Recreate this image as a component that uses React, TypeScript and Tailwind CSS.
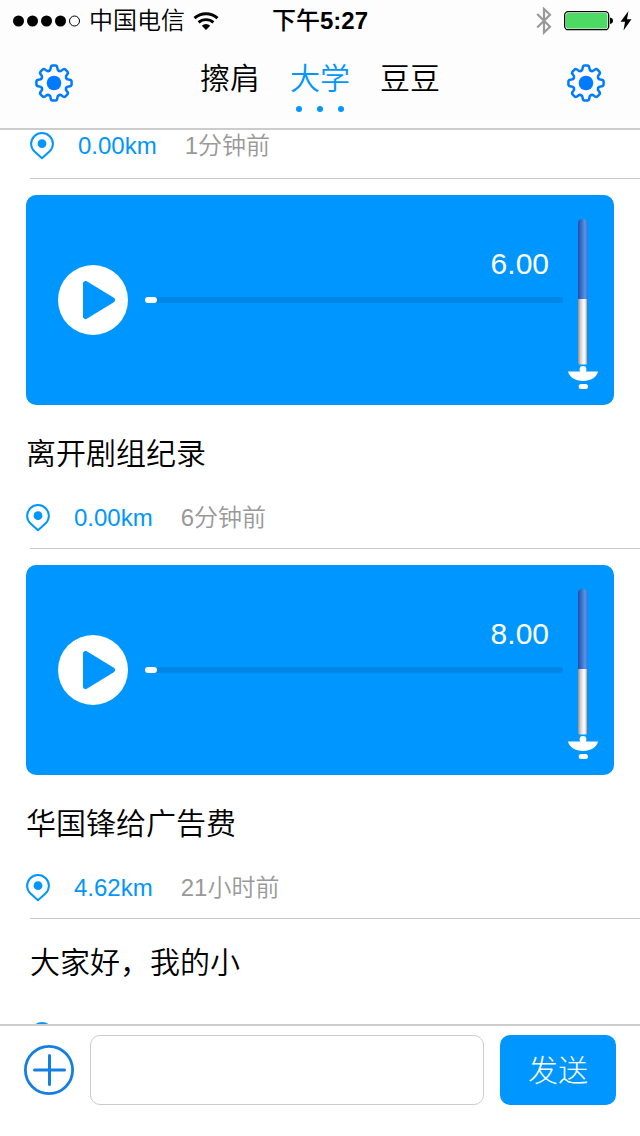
import { useId, useState } from 'react';

const tabs = ['擦肩', '大学', '豆豆'];

const clips = [
  { title: '离开剧组纪录', length: '6.00', distance: '0.00km', time: '6分钟前' },
  { title: '华国锋给广告费', length: '8.00', distance: '4.62km', time: '21小时前' },
];

const gearAngles = [0, 45, 90, 135, 180, 225, 270, 315];

function GearIcon() {
  return (
    <svg className="size-10" viewBox="-20 -20 40 40" fill="none" aria-hidden="true">
      <circle r="7.3" fill="#007aff" />
      {gearAngles.map((angle) => (
        <path
          key={angle}
          transform={`rotate(${angle})`}
          d="M-5 -12.1C-3.8 -12.6 -3.5 -13.2 -3.4 -14.5C-3.3 -16.7 -2.9 -17.6 -1.4 -17.6H1.4C2.9 -17.6 3.3 -16.7 3.4 -14.5C3.5 -13.2 3.8 -12.6 5 -12.1"
          stroke="#007aff"
          strokeWidth="2.5"
          strokeLinecap="round"
          strokeLinejoin="round"
        />
      ))}
    </svg>
  );
}

function PinIcon() {
  return (
    <svg className="h-7 w-6 shrink-0" viewBox="0 0 24 28" fill="none" aria-hidden="true">
      <path
        d="M12 26.3L4.3 19.3A10.9 10.9 0 0 1 1.1 12A10.9 10.9 0 0 1 22.9 12A10.9 10.9 0 0 1 19.7 19.3Z"
        stroke="#0096ff"
        strokeWidth="2"
        strokeLinejoin="round"
      />
      <circle cx="12" cy="11.7" r="4.4" fill="#0096ff" />
    </svg>
  );
}

function MicIcon() {
  const id = useId();
  return (
    <svg className="mt-2 h-[170px] w-[30px] shrink-0" viewBox="0 0 30 170" aria-hidden="true">
      <defs>
        <linearGradient id={`${id}b`}>
          <stop offset="0" stopColor="#1d4fa3" />
          <stop offset="0.35" stopColor="#3a6cc8" />
          <stop offset="0.75" stopColor="#5f93e4" />
          <stop offset="1" stopColor="#3f74cc" />
        </linearGradient>
        <linearGradient id={`${id}w`}>
          <stop offset="0" stopColor="#8c8c8c" />
          <stop offset="0.3" stopColor="#d6d6d6" />
          <stop offset="0.65" stopColor="#ffffff" />
          <stop offset="0.85" stopColor="#d8d8d8" />
          <stop offset="1" stopColor="#777777" />
        </linearGradient>
      </defs>
      <path d="M10 80V4Q10 0 14.7 0T19.4 4V80Z" fill={`url(#${id}b)`} />
      <path d="M10 80H19.4V144Q19.4 145.6 17 145.6H12.4Q10 145.6 10 144Z" fill={`url(#${id}w)`} />
      <circle cx="15" cy="150.4" r="3.4" fill="#fff" />
      <path d="M0 152.5H30C28.5 158.5 22.5 162 15 162S1.5 158.5 0 152.5Z" fill="#fff" />
      <rect x="10.7" y="165" width="9.3" height="5" rx="2.5" fill="#fff" />
    </svg>
  );
}

function Meta({ distance, time }: { distance: string; time: string }) {
  return (
    <div className="flex h-8 items-center text-2xl">
      <PinIcon />
      <span className="ml-6 text-[#0096ff]">{distance}</span>
      <span className="ml-7 font-[350] text-[#999999]">{time}</span>
    </div>
  );
}

function Divider() {
  return <hr className="ml-[30px] border-t border-[#c8c7cc]" />;
}

function Player({ length }: { length: string }) {
  return (
    <div className="flex items-center rounded-[10px] bg-[#0096ff] py-4 pr-4 pl-8">
      <button type="button" aria-label="播放" className="size-[70px] shrink-0 rounded-full bg-white">
        <svg className="size-[70px]" viewBox="0 0 70 70" aria-hidden="true">
          <path
            d="M27.5 18.5L54.5 35L27.5 51.5Z"
            fill="#0096ff"
            stroke="#0096ff"
            strokeWidth="5"
            strokeLinejoin="round"
          />
        </svg>
      </button>
      <div className="mr-[5px] ml-[17px] flex min-w-0 flex-1 flex-col pb-[51px]">
        <span className="pr-3.5 text-right text-[30px] leading-9 text-white">{length}</span>
        <input
          type="range"
          aria-label="播放进度"
          defaultValue={0}
          className="mt-[15px] h-1.5 w-full appearance-none rounded-full bg-[#0087e5] [&::-webkit-slider-thumb]:h-1.5 [&::-webkit-slider-thumb]:w-3 [&::-webkit-slider-thumb]:appearance-none [&::-webkit-slider-thumb]:rounded-full [&::-webkit-slider-thumb]:bg-white"
        />
      </div>
      <MicIcon />
    </div>
  );
}

function StatusBar() {
  return (
    <div className="grid h-[42px] grid-cols-[1fr_auto_1fr] items-center text-2xl">
      <div className="flex items-center pl-[13px]">
        <svg className="h-3 w-[68px]" viewBox="0 0 68 12" aria-hidden="true">
          <circle cx="5.5" cy="6" r="5.5" />
          <circle cx="19.5" cy="6" r="5.5" />
          <circle cx="33.5" cy="6" r="5.5" />
          <circle cx="47.5" cy="6" r="5.5" />
          <circle cx="61.5" cy="6" r="5" fill="none" stroke="#000" />
        </svg>
        <span className="ml-2 font-[350]">中国电信</span>
        <svg className="ml-2 h-[18px] w-[26px]" viewBox="0 0 26 18" fill="none" aria-hidden="true">
          <path d="M1.5 6.2A17 17 0 0 1 24.5 6.2" stroke="#000" strokeWidth="3" />
          <path d="M5.6 10.4A11 11 0 0 1 20.4 10.4" stroke="#000" strokeWidth="2.8" />
          <path d="M13 18L8.8 13.7A6.2 6.2 0 0 1 17.2 13.7Z" fill="#000" />
        </svg>
      </div>
      <span className="font-bold">
        <span className="font-medium">下午</span>5:27
      </span>
      <div className="flex items-center justify-end pr-2">
        <svg className="h-7 w-4" viewBox="0 0 16 28" fill="none" aria-hidden="true">
          <path d="M1.2 7L14 19.8L8 25.5V2L14 7.7L1.2 20.5" stroke="#999" strokeWidth="2.2" />
        </svg>
        <svg className="ml-3 h-5 w-[50px]" viewBox="0 0 50 20" aria-hidden="true">
          <rect x="0.7" y="0.7" width="44" height="18" rx="3.5" fill="#fff" stroke="#000" strokeWidth="1.3" />
          <rect x="2" y="2" width="41.4" height="15.4" rx="2" fill="#4cd964" />
          <path d="M46 6.5Q49 7 49 9.7T46 13Z" />
        </svg>
        <svg className="ml-1.5 h-5 w-3" viewBox="0 0 12 20" aria-hidden="true">
          <path d="M8.5 0L0.5 10.8H5L3.5 19.5L11.5 8.3H7Z" />
        </svg>
      </div>
    </div>
  );
}

export default function App() {
  const [active, setActive] = useState('大学');
  return (
    <div className="flex h-screen flex-col bg-white font-['Liberation_Sans','Noto_Sans_CJK_SC',sans-serif] text-black">
      <header className="border-b-2 border-[#cccccc] bg-[#fdfdfd]">
        <StatusBar />
        <div className="flex items-start justify-between px-[34px] pt-[18px] pb-4">
          <button type="button" aria-label="设置" className="flex h-[46px] items-center">
            <GearIcon />
          </button>
          <nav className="flex items-start gap-[30px]">
            {tabs.map((tab) => (
              <button
                key={tab}
                type="button"
                onClick={() => setActive(tab)}
                className={
                  tab === active
                    ? 'flex flex-col items-center gap-2 text-[30px] leading-[38px] font-[350] text-[#0096ff]'
                    : 'text-[30px] leading-[38px] font-[350]'
                }
              >
                {tab}
                {tab === active && (
                  <span className="flex gap-[15px]">
                    <i className="size-1.5 rounded-full bg-[#0096ff]" />
                    <i className="size-1.5 rounded-full bg-[#0096ff]" />
                    <i className="size-1.5 rounded-full bg-[#0096ff]" />
                  </span>
                )}
              </button>
            ))}
          </nav>
          <button type="button" aria-label="选项" className="flex h-[46px] items-center">
            <GearIcon />
          </button>
        </div>
      </header>

      <main className="min-h-0 flex-1 overflow-hidden">
        <article>
          <div className="px-[30px] pb-4">
            <Meta distance="0.00km" time="1分钟前" />
          </div>
          <Divider />
        </article>
        {clips.map((clip) => (
          <article key={clip.title}>
            <div className="px-[26px] pt-4 pb-3.5">
              <Player length={clip.length} />
              <h2 className="mt-[29px] mb-7 text-[30px] leading-10 font-[350]">{clip.title}</h2>
              <Meta distance={clip.distance} time={clip.time} />
            </div>
            <Divider />
          </article>
        ))}
        <article className="px-[30px] pt-6">
          <h2 className="mb-[39px] text-[30px] leading-10 font-[350]">大家好，我的小</h2>
          <PinIcon />
        </article>
      </main>

      <footer className="flex items-center gap-4 border-t-2 border-[#cccccc] px-6 pt-[9px] pb-[31px]">
        <button type="button" aria-label="添加" className="shrink-0">
          <svg className="size-[50px]" viewBox="0 0 50 50" fill="none" stroke="#147fe3" strokeLinecap="round" aria-hidden="true">
            <circle cx="25" cy="25" r="23.6" strokeWidth="2.8" />
            <path d="M25.5 10.5V39.5M10.5 25H40.5" strokeWidth="3" />
          </svg>
        </button>
        <input
          type="text"
          aria-label="消息"
          className="h-[70px] min-w-0 flex-1 rounded-[10px] border border-[#cccccc] bg-white px-4 text-[30px] outline-none"
        />
        <button
          type="button"
          className="h-[70px] w-[116px] shrink-0 rounded-[10px] bg-[#0096ff] text-[30px] font-light text-white"
        >
          发送
        </button>
      </footer>
    </div>
  );
}
